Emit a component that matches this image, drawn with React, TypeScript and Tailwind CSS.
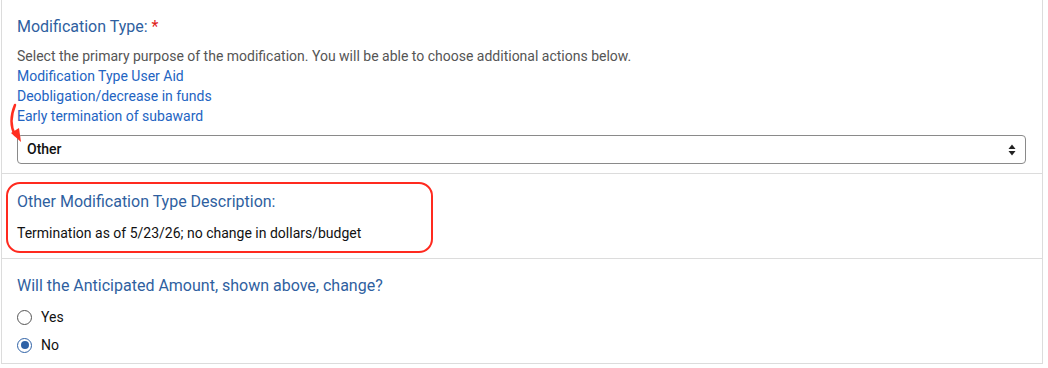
import React from 'react'

const font = { fontFamily: 'Roboto, "Liberation Sans", sans-serif' }

const Radio = ({ checked, label }: { checked?: boolean; label: string }) => (
  <label className="flex items-center gap-[9px] h-[28px] text-[14px] text-[#111]">
    {checked ? (
      <span className="w-[15px] h-[15px] rounded-full border-[1.5px] border-[#2f62a6] flex items-center justify-center">
        <span className="w-[8px] h-[8px] rounded-full bg-[#2f62a6]" />
      </span>
    ) : (
      <span className="w-[15px] h-[15px] rounded-full border-[1.5px] border-[#555]" />
    )}
    {label}
  </label>
)

const App: React.FC = () => {
  return (
    <div className="w-[1048px] h-[368px] bg-white overflow-hidden" style={font}>
      <div className="relative ml-px w-[1042px] border-x border-[#dcdcdc]">
        {/* Modification type */}
        <section className="pl-[15px] pr-4 pt-[17px] pb-[9px] border-b border-[#dcdcdc]">
          <h3 className="text-[16px] leading-[20px] text-[#2f5f9f]">
            Modification Type: <span className="text-[#e0201b]">*</span>
          </h3>
          <p className="mt-[9px] text-[14px] leading-[20px] text-[#555]">
            Select the primary purpose of the modification. You will be able to choose additional actions below.
          </p>
          <div className="flex flex-col text-[14px] leading-[20px] text-[#2364c2]">
            <a>Modification Type User Aid</a>
            <a>Deobligation/decrease in funds</a>
            <a>Early termination of subaward</a>
          </div>
          <div className="mt-[9px] h-[29px] w-[1009px] rounded-[4px] border border-[#8a8a8a] flex items-center justify-between pl-[9px] pr-[9px]">
            <span className="text-[14px] font-medium text-[#111]">Other</span>
            <svg width="8" height="12" viewBox="0 0 8 12">
              <path d="M4 0.5 L7.5 5 H0.5 Z" fill="#222" />
              <path d="M4 11.5 L7.5 7 H0.5 Z" fill="#222" />
            </svg>
          </div>
        </section>

        {/* red arrow annotation */}
        <svg className="absolute left-[-1px] top-[101px]" width="30" height="46" viewBox="0 0 30 46">
          <path d="M14 4 Q7 21 14 34" stroke="#ff2d1f" strokeWidth="2.5" fill="none" strokeLinecap="round" />
          <path d="M10 32 L20 41 L18 27 Z" fill="#ff2d1f" />
        </svg>

        {/* Other description */}
        <section className="px-[4px] pt-[8px] pb-[5px] border-b border-[#dcdcdc]">
          <div className="w-[427px] h-[71px] rounded-[14px] border-[2.5px] border-[#ff2a1f] pl-[9px] pt-[8px]">
            <h3 className="text-[16px] leading-[20px] text-[#2f5f9f]">Other Modification Type Description:</h3>
            <p className="mt-[11px] text-[14px] leading-[20px] text-[#111]">
              Termination as of 5/23/26; no change in dollars/budget
            </p>
          </div>
        </section>

        {/* Anticipated amount */}
        <section className="pl-[15px] pt-[17px] pb-[4px] border-b border-[#dcdcdc]">
          <h3 className="text-[16px] leading-[20px] text-[#2f5f9f]">Will the Anticipated Amount, shown above, change?</h3>
          <div className="mt-[7px] flex flex-col">
            <Radio label="Yes" />
            <Radio label="No" checked />
          </div>
        </section>
      </div>
    </div>
  )
}

export default App
